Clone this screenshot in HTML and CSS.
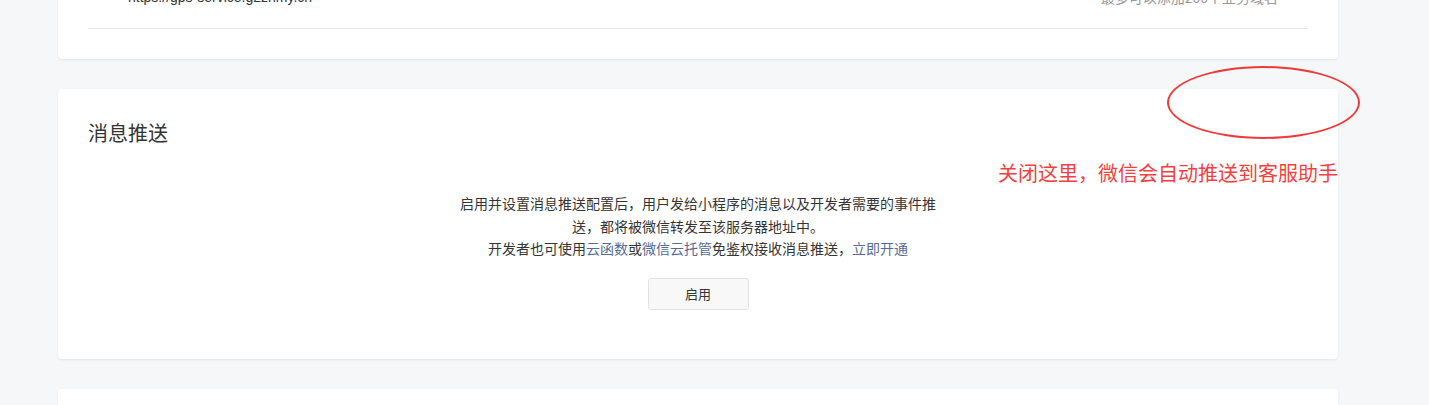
FILE: index.html
```html
<!DOCTYPE html>
<html lang="zh-CN">
<head>
<meta charset="utf-8">
<title>消息推送</title>
<link rel="stylesheet" href="styles.css">
</head>
<body>
<div class="page">
  <section class="card card-domain">
    <div class="domain-row">
      <span class="domain-url">https://gps-service.g2zhmy.cn</span>
      <span class="domain-tip">最多可以添加200个业务域名</span>
    </div>
    <div class="divider"></div>
  </section>

  <section class="card card-push">
    <h2 class="card-title">消息推送</h2>
    <div class="push-body">
      <p class="push-desc">启用并设置消息推送配置后，用户发给小程序的消息以及开发者需要的事件推送，都将被微信转发至该服务器地址中。</p>
      <p class="push-note">开发者也可使用<a class="link">云函数</a>或<a class="link">微信云托管</a>免鉴权接收消息推送，<a class="link">立即开通</a></p>
      <button class="btn">启用</button>
    </div>
    <div class="mark-ellipse"></div>
    <div class="mark-text">关闭这里，微信会自动推送到客服助手</div>
  </section>

  <section class="card card-next"></section>
</div>
</body>
</html>
```

FILE: styles.css
```css
html, body {
  margin: 0;
  padding: 0;
  background: #f6f7f9;
  font-family: "Noto Sans CJK SC", "Noto Sans", sans-serif;
  color: #353535;
  overflow: hidden;
}

.page {
  width: 1280px;
  margin-left: 58px;
  margin-top: -40px;
  display: flex;
  flex-direction: column;
  gap: 30px;
}

.card {
  background: #fff;
  border-radius: 4px;
  box-shadow: 0 1px 2px rgba(0, 0, 0, 0.08);
  padding: 0 30px;
  position: relative;
}

.card-domain {
  padding-top: 26px;
  padding-bottom: 30px;
}

.domain-row {
  display: flex;
  justify-content: space-between;
  padding: 0 30px 20px 40px;
  font-size: 14px;
  line-height: 22px;
}

.domain-url {
  color: #353535;
  font-family: "Liberation Sans", "Noto Sans CJK SC", sans-serif;
}

.domain-tip {
  color: #9a9a9a;
}

.divider {
  height: 1px;
  background: #e7e7eb;
}

.card-push {
  padding-top: 30px;
  padding-bottom: 49px;
}

.card-title {
  margin: 0;
  font-size: 20px;
  line-height: 28px;
  font-weight: 400;
  color: #353535;
}

.push-body {
  display: flex;
  flex-direction: column;
  align-items: center;
  margin-top: 45px;
  font-size: 14px;
  line-height: 22.5px;
  color: #353535;
  text-align: center;
}

.push-desc {
  margin: 0;
  width: 486px;
}

.push-note {
  margin: 0;
}

.link {
  color: #576b95;
  text-decoration: none;
  cursor: pointer;
}

.btn {
  margin-top: 18px;
  width: 101px;
  height: 32px;
  border: 1px solid #e2e2e2;
  border-radius: 3px;
  background: #f8f8f8;
  font-family: inherit;
  font-size: 13px;
  color: #353535;
  cursor: pointer;
}

.card-next {
  height: 60px;
}

.mark-ellipse {
  position: absolute;
  left: 1109px;
  top: -23px;
  width: 189px;
  height: 69px;
  border: 2.5px solid #f03a3a;
  border-radius: 50%;
}

.mark-text {
  position: absolute;
  left: 940px;
  top: 70px;
  font-size: 20px;
  line-height: 28px;
  color: #f33f3f;
  white-space: nowrap;
}
```
